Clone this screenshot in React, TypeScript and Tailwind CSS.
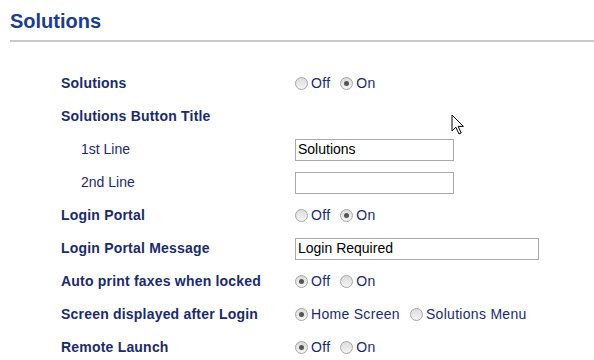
import React from "react";

type Opt = { label: string; checked: boolean };

function Radio({ checked }: { checked: boolean }) {
  return (
    <span className="relative inline-flex h-[13px] w-[13px] shrink-0 items-center justify-center rounded-full border border-[#a6a6a6] bg-gradient-to-b from-[#dcdcdc] to-[#f4f4f4]">
      {checked && <span className="h-[5px] w-[5px] rounded-full bg-[#555]" />}
    </span>
  );
}

function Radios({ options }: { options: Opt[] }) {
  return (
    <div className="flex items-center gap-[10px]">
      {options.map((o) => (
        <label key={o.label} className="flex items-center gap-[3px] text-[14px] tracking-[0.3px] text-[#1b2a6b]">
          <Radio checked={o.checked} />
          <span>{o.label}</span>
        </label>
      ))}
    </div>
  );
}

function TextBox({ value, width }: { value: string; width: string }) {
  return (
    <div className={`flex h-[22px] items-center border border-[#a9a9a9] bg-white px-[2px] text-[14px] text-black ${width}`}>
      {value}
    </div>
  );
}

const offOn = (on: boolean): Opt[] => [
  { label: "Off", checked: !on },
  { label: "On", checked: on },
];

const rows: { label: string; indent?: boolean; control?: React.ReactNode }[] = [
  { label: "Solutions", control: <Radios options={offOn(true)} /> },
  { label: "Solutions Button Title" },
  { label: "1st Line", indent: true, control: <TextBox value="Solutions" width="w-[159px]" /> },
  { label: "2nd Line", indent: true, control: <TextBox value="" width="w-[159px]" /> },
  { label: "Login Portal", control: <Radios options={offOn(true)} /> },
  { label: "Login Portal Message", control: <TextBox value="Login Required" width="w-[244px]" /> },
  { label: "Auto print faxes when locked", control: <Radios options={offOn(false)} /> },
  {
    label: "Screen displayed after Login",
    control: (
      <Radios
        options={[
          { label: "Home Screen", checked: true },
          { label: "Solutions Menu", checked: false },
        ]}
      />
    ),
  },
  { label: "Remote Launch", control: <Radios options={offOn(false)} /> },
];

export default function App() {
  return (
    <div className="relative h-[360px] w-[594px] overflow-hidden bg-white font-['Liberation_Sans',Arial,sans-serif]">
      {/* Page title */}
      <div className="pl-[10px] pt-[9px]">
        <h1 className="text-[20px] font-bold leading-[24px] text-[#1d3d8c]">Solutions</h1>
        <div className="mt-[7px] h-[2px] bg-[#c8c8c8]" />
      </div>

      {/* Settings table */}
      <div className="mt-[25px] flex flex-col">
        {rows.map((r) => (
          <div key={r.label} className="flex h-[33px] items-center">
            <div
              className={`w-[295px] shrink-0 text-[14px] text-[#1b2a6b] ${
                r.indent ? "pl-[81px] font-normal" : "pl-[61px] font-bold tracking-[0.2px]"
              }`}
            >
              {r.label}
            </div>
            {r.control}
          </div>
        ))}
      </div>

      {/* Mouse pointer */}
      <svg className="absolute left-[451px] top-[114px]" width="15" height="22" viewBox="0 0 15 22">
        <path
          d="M1 1 L1 17 L4.8 13.2 L8 20 L10.2 19 L7.2 12.4 L12.4 12.4 Z"
          fill="white"
          stroke="black"
          strokeWidth="1"
          strokeLinejoin="miter"
        />
      </svg>
    </div>
  );
}
